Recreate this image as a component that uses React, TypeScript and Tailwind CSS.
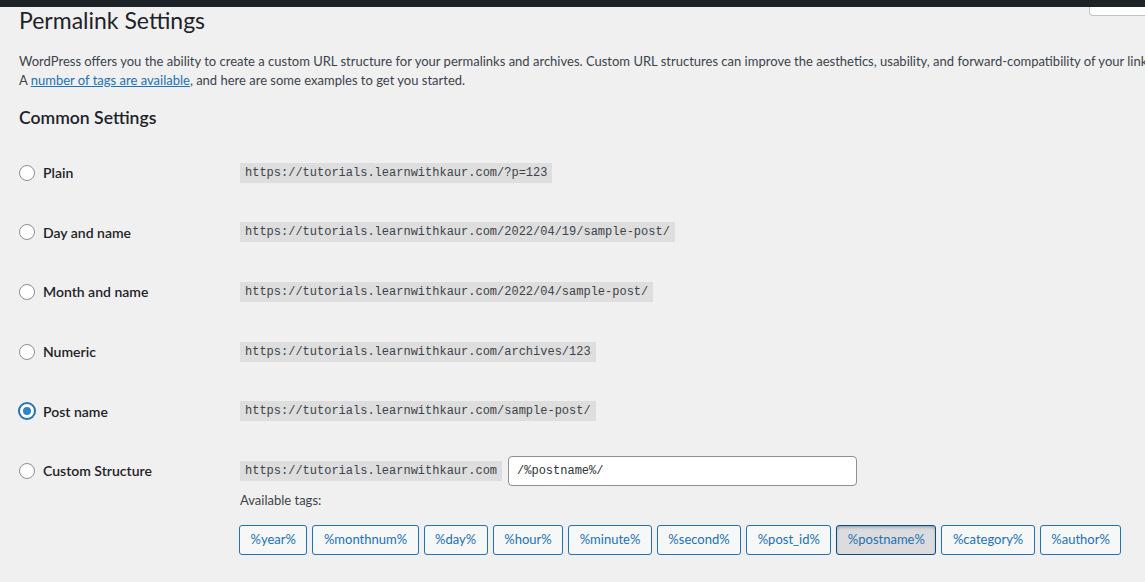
import React from 'react';

const sans = "font-['Lato',sans-serif]";
const mono = "font-['Liberation_Mono',monospace]";

const options = [
  { label: 'Plain', url: 'https://tutorials.learnwithkaur.com/?p=123' },
  { label: 'Day and name', url: 'https://tutorials.learnwithkaur.com/2022/04/19/sample-post/' },
  { label: 'Month and name', url: 'https://tutorials.learnwithkaur.com/2022/04/sample-post/' },
  { label: 'Numeric', url: 'https://tutorials.learnwithkaur.com/archives/123' },
  { label: 'Post name', url: 'https://tutorials.learnwithkaur.com/sample-post/', checked: true },
];

const tags = [
  '%year%',
  '%monthnum%',
  '%day%',
  '%hour%',
  '%minute%',
  '%second%',
  '%post_id%',
  '%postname%',
  '%category%',
  '%author%',
];

function Radio({ checked }: { checked?: boolean }) {
  return (
    <span
      className={
        'flex h-4 w-4 shrink-0 items-center justify-center rounded-full border bg-white ' +
        (checked ? 'border-[#2271b1] shadow-[0_0_0_1px_#2271b1]' : 'border-[#8c8f94]')
      }
    >
      {checked && <span className="h-2 w-2 rounded-full bg-[#3582c4]" />}
    </span>
  );
}

function Code({ children }: { children: React.ReactNode }) {
  return (
    <code className={`${mono} block h-5 bg-[#dedede] px-[5px] text-[12px] leading-5 text-[#3c434a]`}>
      {children}
    </code>
  );
}

export default function App() {
  return (
    <div className={`${sans} relative h-[582px] w-[1145px] overflow-hidden bg-[#f0f0f1] text-[#3c434a]`}>
      {/* admin bar */}
      <div className="h-[7px] bg-[#1d2327]" />
      {/* screen options tab */}
      <div className="absolute right-0 top-[7px] h-[9px] w-[56px] rounded-bl-[4px] border-b border-l border-[#c3c4c7] bg-white" />

      <div className="pl-[19px]">
        <h1 className="mt-[-1px] text-[23px] leading-[29px] font-normal text-[#1d2327]">Permalink Settings</h1>

        <div className="mt-[17px] whitespace-nowrap text-[13px] leading-[19px]">
          <p>
            WordPress offers you the ability to create a custom URL structure for your permalinks and archives. Custom URL
            structures can improve the aesthetics, usability, and forward-compatibility of your links.
          </p>
          <p>
            A{' '}
            <a className="text-[#2271b1] underline" href="#">
              number of tags are available
            </a>
            , and here are some examples to get you started.
          </p>
        </div>

        <h2 className="mt-[16px] text-[17.6px] leading-[24px] font-semibold text-[#1d2327]">Common Settings</h2>

        <div className="mt-[13px]">
          {options.map((o) => (
            <div key={o.label} className="flex h-[59.6px] items-center">
              <label className="flex w-[221px] items-center gap-[8px] text-[14px] font-semibold text-[#1d2327]">
                <Radio checked={o.checked} />
                {o.label}
              </label>
              <Code>{o.url}</Code>
            </div>
          ))}

          <div className="flex h-[59.6px] items-center">
            <label className="flex w-[221px] items-center gap-[8px] text-[14px] font-semibold text-[#1d2327]">
              <Radio />
              Custom Structure
            </label>
            <div className="flex items-center gap-[6px]">
              <Code>https://tutorials.learnwithkaur.com</Code>
              <div
                className={`${mono} flex h-[30px] w-[349px] items-center rounded-[4px] border border-[#8c8f94] bg-white px-[8px] text-[12px] text-[#2c3338]`}
              >
                /%postname%/
              </div>
            </div>
          </div>
        </div>

        <div className="ml-[220px] mt-[-10px]">
          <p className="pl-px text-[13px] leading-[19px]">Available tags:</p>
          <div className="mt-[15px] flex gap-[5px]">
            {tags.map((t) => (
              <button
                key={t}
                className={
                  'h-[30px] rounded-[3px] border px-[10.5px] text-[13px] text-[#2271b1] ' +
                  (t === '%postname%'
                    ? 'border-[#0a4b78] bg-[#dcdcde] shadow-[inset_0_2px_5px_-3px_#0a4b78]'
                    : 'border-[#2271b1] bg-[#f6f7f7]')
                }
              >
                {t}
              </button>
            ))}
          </div>
        </div>
      </div>
    </div>
  );
}
